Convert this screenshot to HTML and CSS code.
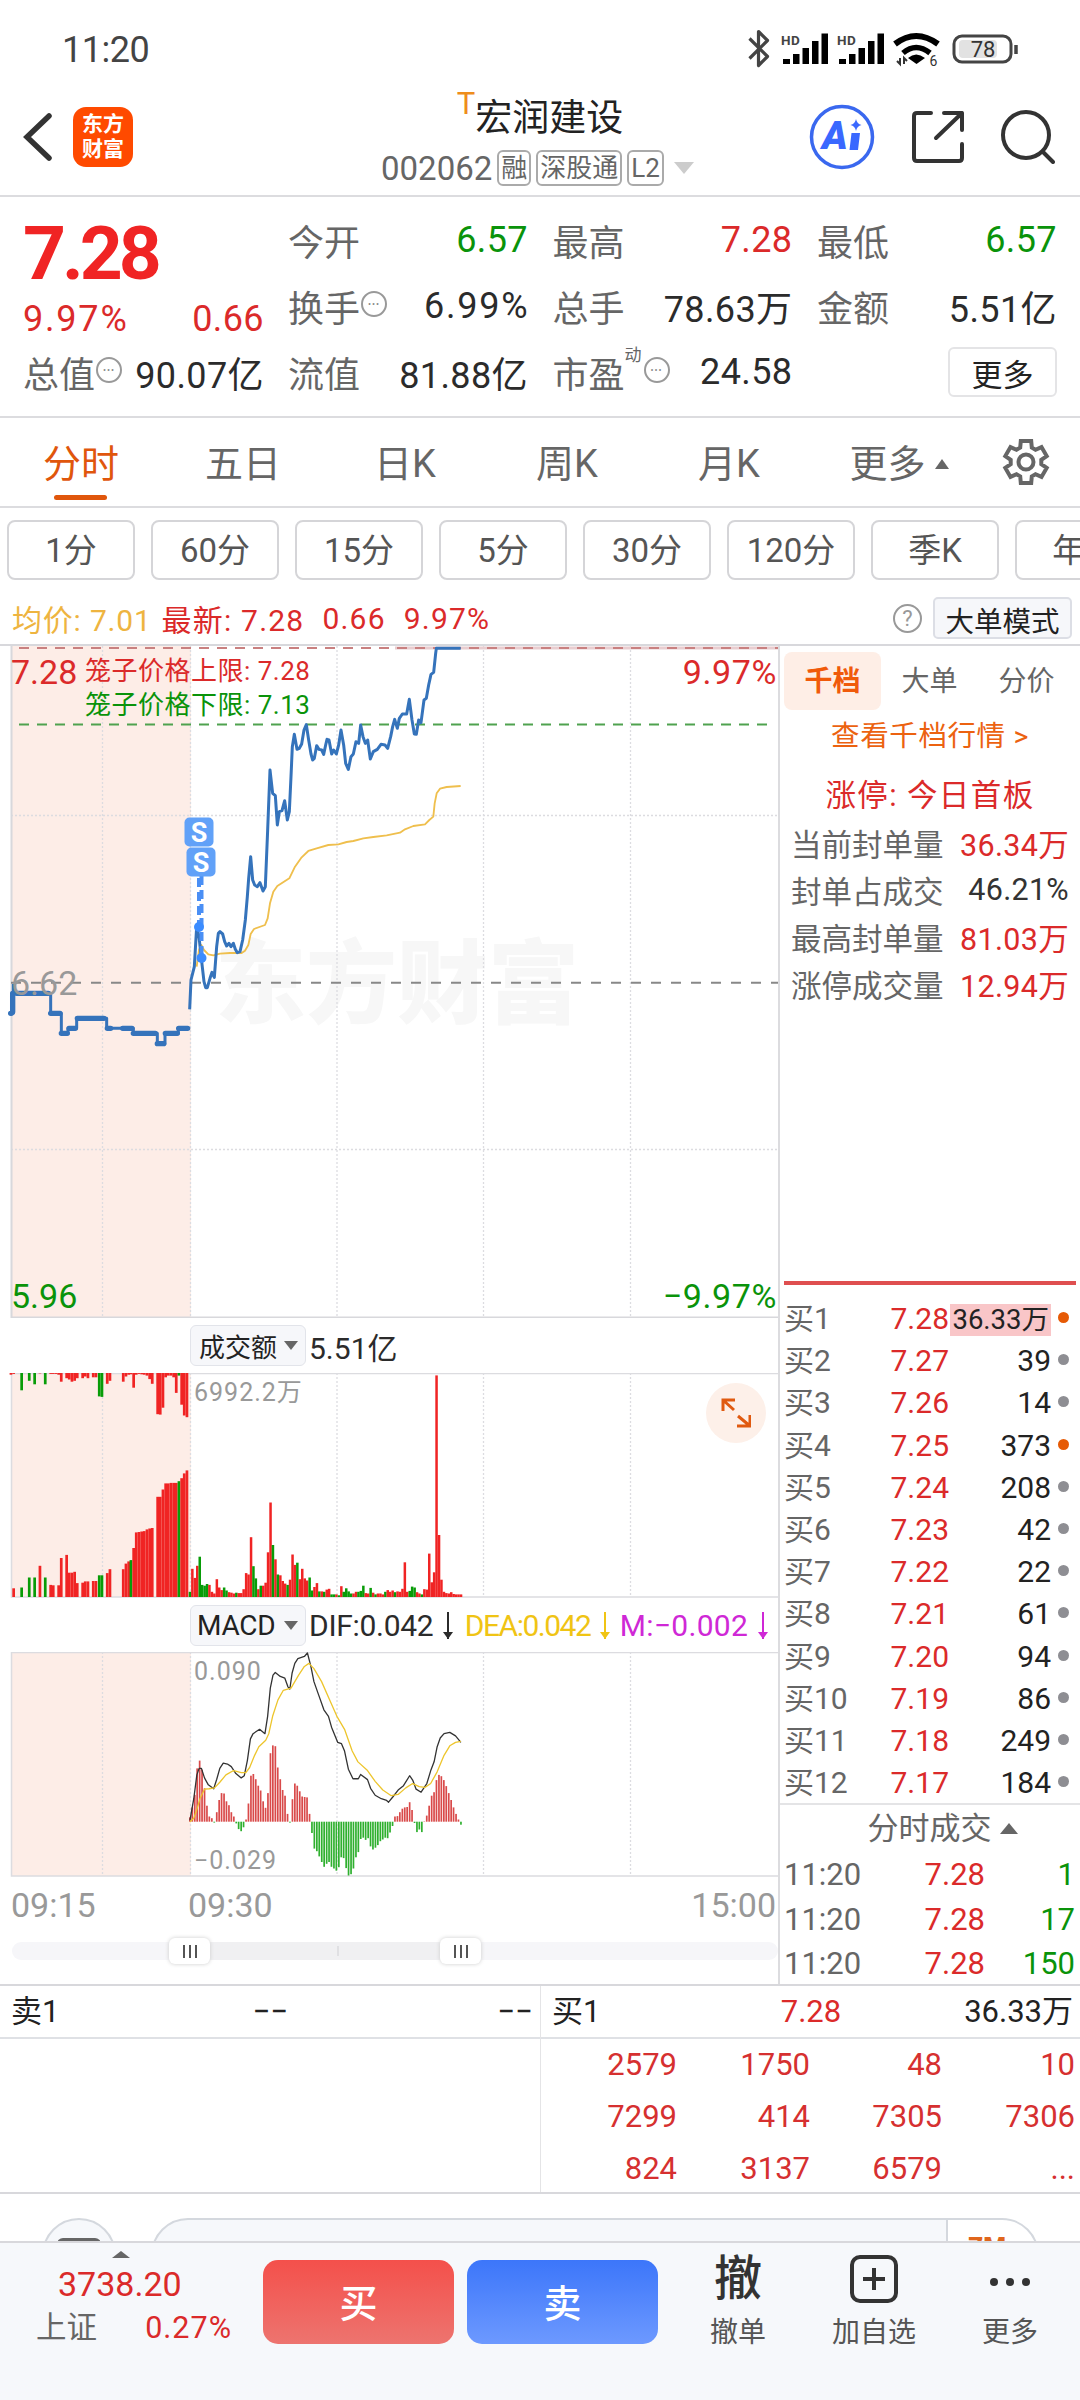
FILE: index.html
```
<!DOCTYPE html>
<html lang="zh-CN">
<head>
  <meta charset="UTF-8" />
  <meta name="viewport" content="width=device-width, initial-scale=1.0"/>
  <title>宏润建设 002062</title>
  <link rel="stylesheet" href="styles.css">
</head>
<body>

<!-- Status bar -->
<div class="status-bar">
  <span class="clock">11:20</span>
  <svg class="status-icons" width="280" height="50" viewBox="0 0 280 50">
    <path d="M4 15 L22 33 L13 42 V8 L22 17 L4 35" transform="translate(1.500 -1.500)" fill="none" stroke="#444" stroke-width="3.200" stroke-linejoin="round"/>
    <g id="signal">
      <text x="37" y="19.500" class="hd">HD</text>
      <path d="M39 34h7v5h-7zM49 29h6.500v10H49zM58.500 23h6.500v16h-6.500zM68 16h6.500v23H68zM77.500 8.500H84V39h-6.500z"/>
    </g>
    <use href="#signal" x="56"/>
    <g fill="none" stroke="#000" stroke-width="6">
      <path d="M151 19 Q172 3 194 19"/>
      <path d="M159 28 Q172 17 186 28" stroke-width="5.500"/>
    </g>
    <path d="M164 33 Q172 26 181 33 L172.500 39z"/>
    <path d="M156 33v6l-3-3M160 39v-6l3 3" fill="none" stroke="#333" stroke-width="2"/>
    <text x="185.500" y="40.500" class="wifi-gen">6</text>
    <rect x="210" y="11" width="57" height="26" rx="8" fill="none" stroke="#444" stroke-width="3"/>
    <rect x="215" y="15" width="38" height="18" rx="4" fill="#e2e2e2"/>
    <path d="M272 20v9" stroke="#444" stroke-width="3.500"/>
    <text x="239" y="32" class="battery">78</text>
  </svg>
</div>

<!-- Header -->
<header class="header">
  <div class="header-left">
    <svg width="30" height="50" viewBox="0 0 30 50"><path d="M27 4 L5 25 L27 46" fill="none" stroke="#333" stroke-width="5.500" stroke-linecap="round"/></svg>
    <div class="logo">东方<br>财富</div>
  </div>
  <div class="stock">
    <div class="stock-name"><span class="t-mark">T</span>宏润建设</div>
    <div class="stock-code">002062<span class="tag">融</span><span class="tag">深股通</span><span class="tag">L2</span><i class="tri-down light"></i></div>
  </div>
  <div class="header-right">
    <svg width="66" height="66" viewBox="0 0 66 66">
      <circle cx="33" cy="33" r="30.500" fill="none" stroke="#3a68ef" stroke-width="3.500"/>
      <text x="13" y="45" class="ai">A</text>
      <path d="M42.500 29h8.500l-2 17h-8.500zM47 15q1 5 5.500 6q-4.500 1-5.500 6q-1-5-5.500-6q4.500-1 5.500-6z" fill="#3a68ff"/>
    </svg>
    <svg width="54" height="54" viewBox="0 0 54 54" fill="none" stroke="#333" stroke-width="4" stroke-linecap="round" stroke-linejoin="round">
      <path d="M20 3H6q-3 0-3 3v42q0 3 3 3h42q3 0 3-3V34M33 3H51V20M51 3L25 28"/>
    </svg>
    <svg width="54" height="54" viewBox="0 0 54 54" fill="none" stroke="#333" stroke-width="4" stroke-linecap="round">
      <circle cx="25" cy="25" r="23"/><path d="M42 42l10 10"/>
    </svg>
  </div>
</header>

<!-- Quote summary -->
<section class="quote">
  <div class="quote-main">
    <div class="price">7.28</div>
    <div class="pair change"><span class="pct">9.97%</span><span>0.66</span></div>
    <div class="pair"><span class="label">总值<i class="more-dot">•••</i></span><span>90.07亿</span></div>
  </div>
  <div class="quote-grid">
    <div class="pair"><span class="label">今开</span><span class="green">6.57</span></div>
    <div class="pair"><span class="label">最高</span><span class="red">7.28</span></div>
    <div class="pair"><span class="label">最低</span><span class="green">6.57</span></div>
    <div class="pair"><span class="label">换手<i class="more-dot">•••</i></span><span class="pct">6.99%</span></div>
    <div class="pair"><span class="label">总手</span><span>78.63万</span></div>
    <div class="pair"><span class="label">金额</span><span>5.51亿</span></div>
    <div class="pair"><span class="label">流值</span><span>81.88亿</span></div>
    <div class="pair"><span class="label">市盈<sup>动</sup><i class="more-dot">•••</i></span><span>24.58</span></div>
    <div class="pair"><span></span><button class="more-btn">更多</button></div>
  </div>
</section>

<nav class="tabs">
  <span class="tab active">分时</span>
  <span class="tab">五日</span>
  <span class="tab">日K</span>
  <span class="tab">周K</span>
  <span class="tab">月K</span>
  <span class="tab more">更多<i class="tri-up small"></i></span>
  <svg class="gear" width="48" height="50" viewBox="-24 -25 48 50" fill="none" stroke="#666" stroke-width="4">
    <path id="gearPath"/><circle r="7.500"/>
  </svg>
</nav>

<div class="periods">
  <span>1分</span><span>60分</span><span>15分</span><span>5分</span><span>30分</span><span>120分</span><span>季K</span><span>年K</span>
</div>

<div class="info-row">
  <span class="avg">均价: 7.01</span>
  <span class="last">最新: 7.28</span>
  <span class="last">0.66</span>
  <span class="last">9.97%</span>
  <span class="help">?</span>
  <button class="mode-btn">大单模式</button>
</div>

<main class="board">
  <div class="charts">
    <!-- Price chart -->
    <svg class="chart" width="778" height="672" viewBox="0 0 778 672">
      <rect x="11" y="0" width="180" height="671" fill="#fdede7"/>
      <text x="215" y="370" class="watermark">东方财富</text>
      <path class="grid" d="M102.500 0V671M190.500 0V671M337 0V671M483.500 0V671M630.500 0V671M11 169.500H778M11 503.500H778"/>
      <path d="M11.500 0V671.500H778" fill="none" stroke="#d8d8dc" stroke-width="2"/>
      <path d="M395 2H778" stroke="#e8cdd0" stroke-width="3"/>
      <path d="M19 2H778" stroke="#c98080" stroke-width="2" stroke-dasharray="10 8"/>
      <path d="M19 78.500H770" stroke="#4fa24f" stroke-width="2" stroke-dasharray="10 8"/>
      <path d="M11 336.800H778" stroke="#888" stroke-width="2" stroke-dasharray="10 10"/>
      <text x="11" y="38" class="axis red">7.28</text>
      <text x="777" y="38" class="axis red end pct-axis">9.97%</text>
      <text x="85" y="34" class="cage red">笼子价格上限: 7.28</text>
      <text x="85" y="68" class="cage green">笼子价格下限: 7.13</text>
      <text x="11" y="662" class="axis green">5.96</text>
      <text x="777" y="662" class="axis green end pct-axis">−9.97%</text>
      <g transform="translate(0 -16) scale(.33333)" fill="none" stroke-linejoin="round">
        <polyline class="avg-line" points="590,1010 597,960 604,945 612,960 625,973 640,976 660,971 690,969 725,969 735,962 745,945 752,912 762,897 795,885 803,865 810,820 820,785 832,768 868,745 885,710 905,682 925,663 950,655 985,645 1015,643 1040,636 1060,633 1090,625 1120,621 1160,616 1200,608 1215,598 1240,588 1275,583 1288,570 1300,560 1304,520 1310,490 1320,476 1340,471 1382,468"/>
        <path class="price-line" d="M34 1150H40V1062M40 1090H152V1150H184V1210H204V1195H230V1165H320V1195H400V1210H472V1241H495V1210H535V1195H567"/>
        <path class="price-dots" d="M32 1150H34M38 1090V1145M50 1090H145M152 1150H180M184 1210H202M207 1195H226M232 1165H312M322 1195H332M368 1195H396M400 1210H466M472 1241H491M496 1210H532M536 1195H563"/>
        <polyline class="price-line" points="569,1138 573,1050 583,1010 590,890 597,920 604,985 612,1055 617,1073 622,1073 630,1045 636,1027 643,1042 650,950 655,910 660,905 668,912 674,935 680,948 687,940 693,950 700,940 706,958 712,968 720,965 728,930 736,870 742,800 746,745 752,680 758,750 764,765 772,770 780,758 789,783 796,770 803,600 810,420 818,490 826,497 832,585 838,545 846,542 854,512 862,570 868,545 873,440 877,350 883,313 891,358 898,355 905,342 912,300 919,284 926,330 933,372 938,390 943,385 950,347 957,358 965,360 971,373 977,345 981,328 987,330 995,372 1001,360 1009,372 1016,345 1023,300 1031,345 1037,400 1045,418 1053,380 1060,372 1068,335 1076,340 1082,285 1089,320 1096,340 1103,330 1111,387 1120,365 1132,358 1143,343 1155,345 1163,355 1172,320 1178,290 1184,268 1192,295 1198,265 1207,252 1220,252 1228,208 1236,270 1243,312 1249,313 1256,270 1263,278 1272,210 1279,205 1286,165 1293,133 1301,127 1307,70 1309,55 1382,55"/>
      </g>
      <!-- Sell markers -->
      <path d="M199 218V282M201.500 230V312" stroke="#4a8ff5" stroke-width="4" stroke-dasharray="9 5"/>
      <circle cx="199" cy="281" r="5" fill="#3b8cff"/>
      <circle cx="201.500" cy="312" r="5" fill="#3b8cff"/>
      <rect x="184.500" y="171.500" width="29" height="29" rx="5" fill="#61a1f8"/>
      <rect x="186.500" y="201.500" width="29" height="29" rx="5" fill="#61a1f8"/>
      <text x="199" y="196" class="sell">S</text>
      <text x="201" y="226" class="sell">S</text>
      <text x="11" y="349" class="axis gray">6.62</text>
    </svg>

    <div class="indicator">
      <span class="select">成交额<i class="tri-down"></i></span>
      <span class="amount">5.51亿</span>
    </div>

    <!-- Turnover chart -->
    <div class="chart-box">
      <svg class="chart" width="778" height="225" viewBox="0 0 778 225">
        <rect x="11" y="0" width="180" height="224" fill="#fdede7"/>
        <path class="grid" d="M102.500 0V224M190.500 0V224M337 0V224M483.500 0V224M630.500 0V224"/>
        <path d="M11.500 0V224H778M11 .5H778" fill="none" stroke="#dcdce0" stroke-width="1.500"/>
        <g id="volume"></g>
        <text x="194" y="28" class="scale">6992.2万</text>
      </svg>
      <span class="expand">
        <svg width="30" height="30" viewBox="0 0 30 30" fill="none" stroke="#e05a10" stroke-width="3">
          <path d="M14 2H2V13M2 2L13 12M29 17V28H16M29 28L17 18"/>
        </svg>
      </span>
    </div>

    <div class="indicator macd">
      <span class="select">MACD<i class="tri-down"></i></span>
      <span class="dif">DIF:0.042<b class="arrow"></b></span>
      <span class="dea">DEA:0.042<b class="arrow"></b></span>
      <span class="m">M:−0.002<b class="arrow"></b></span>
    </div>

    <!-- MACD chart -->
    <svg class="chart" width="778" height="225" viewBox="0 0 778 225">
      <rect x="11" y="0" width="180" height="224" fill="#fdede7"/>
      <path class="grid" d="M102.500 0V224M190.500 0V224M337 0V224M483.500 0V224M630.500 0V224"/>
      <path d="M11.500 0V224H778M11 .5H778" fill="none" stroke="#dcdce0" stroke-width="1.500"/>
      <g id="macd"></g>
      <g transform="translate(180 -352) scale(.38268 .43367)" fill="none" stroke-linejoin="round">
        <polyline class="thin" stroke="#333" points="26,1200 36,1150 44,1095 50,1080 56,1080 64,1102 74,1118 88,1127 96,1105 104,1080 113,1068 124,1070 134,1076 146,1092 160,1102 168,1097 176,1062 184,1012 191,1000 208,990 222,1000 229,960 236,895 243,865 249,859 262,868 274,872 282,892 287,897 293,860 300,838 308,827 325,822 333,814 342,845 350,880 362,910 376,945 388,960 396,985 412,1020 422,1023 430,1040 440,1082 452,1104 466,1104 472,1094 490,1106 498,1126 510,1142 526,1150 540,1154 545,1158 556,1146 570,1130 584,1120 600,1097 608,1107 617,1128 630,1135 645,1115 656,1083 664,1065 672,1030 680,1010 690,1000 705,997 720,1005 734,1020"/>
        <polyline class="thin" stroke="#edc52c" points="26,1203 36,1195 44,1175 52,1150 64,1128 76,1127 90,1125 104,1112 120,1095 140,1085 160,1090 172,1090 182,1078 195,1050 206,1030 224,1015 232,1000 242,960 256,922 270,900 290,895 310,865 325,845 337,838 350,850 370,880 390,920 410,960 430,990 450,1040 465,1065 490,1085 510,1110 530,1130 552,1143 570,1140 590,1125 608,1115 625,1122 640,1124 655,1115 672,1088 690,1050 705,1028 720,1020 734,1018"/>
      </g>
      <text x="194" y="28" class="scale">0.090</text>
      <text x="194" y="217" class="scale">−0.029</text>
    </svg>

    <div class="times"><span>09:15</span><span class="mid">09:30</span><span>15:00</span></div>
    <div class="slider">
      <div class="range"></div>
      <span class="handle start"><i></i><i></i><i></i></span>
      <span class="handle stop"><i></i><i></i><i></i></span>
    </div>
  </div>

  <!-- Order book -->
  <aside class="side">
    <div class="side-tabs"><span class="on">千档</span><span>大单</span><span>分价</span></div>
    <div class="side-link">查看千档行情 &gt;</div>
    <div class="limit-title">涨停: 今日首板</div>
    <div class="limit">
      <div><span>当前封单量</span><b class="red">36.34万</b></div>
      <div><span>封单占成交</span><b>46.21%</b></div>
      <div><span>最高封单量</span><b class="red">81.03万</b></div>
      <div><span>涨停成交量</span><b class="red">12.94万</b></div>
    </div>
    <div class="orders" id="orders"></div>
    <div class="deals-title">分时成交<i class="tri-up"></i></div>
    <div class="deals">
      <div><span>11:20</span><span class="red">7.28</span><span class="green">1</span></div>
      <div><span>11:20</span><span class="red">7.28</span><span class="green">17</span></div>
      <div><span>11:20</span><span class="red">7.28</span><span class="green">150</span></div>
    </div>
  </aside>
</main>

<!-- Queue -->
<section class="queue">
  <div class="queue-half">
    <div class="queue-head"><span>卖1</span><span class="dash">−−</span><span class="dash">−−</span></div>
  </div>
  <div class="queue-half">
    <div class="queue-head"><span>买1</span><span class="red">7.28</span><span>36.33万</span></div>
    <div class="queue-grid">
      <span>2579</span><span>1750</span><span>48</span><span>10</span>
      <span>7299</span><span>414</span><span>7305</span><span>7306</span>
      <span>824</span><span>3137</span><span>6579</span><span>...</span>
    </div>
  </div>
</section>

<div class="peek">
  <div class="peek-circle"><i></i></div>
  <div class="peek-pill"><span>7M</span></div>
</div>

<footer class="footer">
  <div class="index">
    <i class="tri-up"></i>
    <div class="index-value">3738.20</div>
    <div class="index-row"><span>上证</span><span class="red">0.27%</span></div>
  </div>
  <button class="trade buy">买</button>
  <button class="trade sell-btn">卖</button>
  <div class="actions">
    <div><span class="cancel">撤</span><small>撤单</small></div>
    <div>
      <svg width="50" height="50" viewBox="0 0 50 50" fill="none" stroke="#333" stroke-width="4"><rect x="3" y="3" width="44" height="44" rx="8"/><path d="M25 14V36M14 25H36"/></svg>
      <small>加自选</small>
    </div>
    <div>
      <svg width="50" height="50" viewBox="0 0 50 50" fill="#333"><circle cx="9" cy="28" r="4"/><circle cx="25" cy="28" r="4"/><circle cx="41" cy="28" r="4"/></svg>
      <small>更多</small>
    </div>
  </div>
</footer>

<script>
  const RED = "#f02424", GREEN = "#089c08";

  function bar(x, y, w, h, fill) {
    return `<rect x="${x.toFixed(1)}" y="${y.toFixed(1)}" width="${w}" height="${h.toFixed(1)}" fill="${fill}"/>`;
  }

  // One value per minute from 09:30, "g" marks a falling minute
  const minutes = "12g 65 44 72 93g 28g 26g 30g 28 12 8 41 22 16 22g 15g 11 10 8 10g 9 9 18 55 52 138 71g 43g 18 26g 26 33 103 218 120g 87 52g 50 37 31 28g 40 98 74 79g 41 65 43 38 45g 15g 23 32 13g 13 12g 17 19 6g 6g 6 4g 25 12g 20g 13g 8g 8 12 12g 14g 26g 9 8 21g 10 6g 8 8 6 12g 16 12 15 11g 13 12 19 80 12 14g 24g 22g 11 8 6g 18 17 100 34 57 511 143 40 12 9 8 11 7 6 6 6".split(" ");
  const call = "41:20 65:22g 88:45g 104:45g 120:72 136:45g 152:28 160:27 176:27 184:90 200:97 208:56 216:56 224:58 232:32 248:33 256:36 264:36 280:37 288:37 298:50g 306:50g 322:55 330:64 370:64 378:77 386:82 393:85g 401:113 409:149 417:150 425:151 433:152 441:156 449:158 457:159 473:231 481:231 489:248 497:262 505:262 513:263 521:263 529:263 537:267g 545:274 553:285 561:292".split(" ");
  const unmatched = "33:4 41:2 65:40g 88:18g 104:26g 120:1 136:26g 152:2 160:2 168:2 176:4 184:20 200:12 208:15 216:20 224:18 232:12 248:12 256:8 264:12 280:10 288:10 298:54g 306:55g 322:25 330:18 370:20 378:8 386:4 393:3 401:34 409:4 417:2 425:3 433:4 441:6 449:14 457:25 473:95 481:96 489:80 497:10 505:6 513:6 521:10 529:46 537:6g 545:73 553:98 561:102".split(" ");

  let out = "";
  const tone = v => v.endsWith("g") ? GREEN : RED;
  call.forEach(v => {
    const [x, h] = v.split(":");
    out += bar(x / 3 - 1.4, 224 - parseFloat(h) / 2.306, 2.7, parseFloat(h) / 2.306, tone(h));
  });
  unmatched.forEach(v => {
    const [x, h] = v.split(":");
    out += bar(x / 3 - 1.4, 0, 2.7, parseFloat(h) / 2.306, tone(h));
  });
  minutes.forEach((v, i) => {
    const h = parseFloat(v) / 2.306;
    out += bar(188.7 + i * 2.442, 224 - h, 2.5, h, tone(v));
  });
  document.getElementById("volume").innerHTML = out;

  const macd = [10,33,62,123,141,120,77,37,12,8,-2,22,50,66,65,47,38,22,12,-4,-17,-22,-13,5,42,106,110,98,83,72,47,32,66,158,176,174,125,98,73,60,18,-2,52,88,83,70,58,57,56,18,-26,-62,-68,-80,-93,-104,-97,-93,-104,-108,-113,-105,-82,-84,-107,-124,-121,-108,-82,-70,-40,-37,-42,-38,-57,-64,-60,-54,-45,-41,-37,-38,-25,-10,12,13,22,30,33,34,45,27,-3,-24,-18,-24,1,14,37,60,68,96,108,105,96,82,66,50,33,18,5,-7];
  document.getElementById("macd").innerHTML = macd.map((v, i) => {
    const h = Math.abs(v) / 2.306;
    return bar(189 + i * 2.442, v > 0 ? 169.7 - h : 169.7, 1.7, h, v > 0 ? "#d94a4a" : "#2fb02f");
  }).join("");

  // Order book rows
  const orders = [["7.28", "36.33万", 1], ["7.27", 39], ["7.26", 14], ["7.25", 373, 1], ["7.24", 208], ["7.23", 42], ["7.22", 22], ["7.21", 61], ["7.20", 94], ["7.19", 86], ["7.18", 249], ["7.17", 184]];
  document.getElementById("orders").innerHTML = orders.map((o, i) =>
    `<div class="order"><span>买${i + 1}</span><span class="red">${o[0]}</span><span class="qty"><em class="${i ? "" : "flash"}">${o[1]}</em></span><i class="${o[2] ? "hot" : ""}"></i></div>`
  ).join("");

  // Gear outline, six teeth
  const pts = [];
  for (let i = 0; i < 6; i++) {
    [[-22, 15.5], [-14, 21.5], [14, 21.5], [22, 15.5]].forEach(([a, r]) => {
      const t = (i * 60 - 90 + a) * Math.PI / 180;
      pts.push((r * Math.cos(t)).toFixed(1) + " " + (r * Math.sin(t)).toFixed(1));
    });
  }
  document.getElementById("gearPath").setAttribute("d", "M" + pts.join("L") + "z");
</script>

</body>
</html>
```
FILE: styles.css
```
* {
  box-sizing: border-box;
}

body {
  margin: 0;
  width: 1080px;
  height: 2400px;
  overflow: hidden;
  background: #fff;
  color: #2b2b2b;
  font-family: Roboto, "Noto Sans CJK SC", sans-serif;
}

i, em {
  font-style: normal;
}

button {
  font-family: inherit;
  color: #222;
  padding: 0;
}

svg {
  display: block;
  flex: none;
}

.red { color: #db2a2a; fill: #db2a2a; }
.green { color: #0a930a; fill: #0a930a; }
.gray { fill: #999; }

.tri-down, .tri-up {
  display: inline-block;
  border: 7px solid transparent;
}
.tri-down { border-top: 9px solid #666; border-bottom: 0; }
.tri-up { border: 9px solid transparent; border-bottom: 11px solid #666; border-top: 0; }
.tri-down.light { border-width: 12px 10px 0; border-top-color: #ccc; margin-left: 10px; }
.tri-up.small { border-width: 0 7px 10px; margin-left: 9px; }

/* status bar */
.status-bar {
  height: 100px;
  display: flex;
  justify-content: space-between;
  padding: 25px 56px 0 62px;
}
.clock {
  font-size: 36px;
  line-height: 50px;
  letter-spacing: -0.5px;
  color: #444;
}
.hd { font-size: 13.500px; font-weight: 700; fill: #444; letter-spacing: .5px; }
.wifi-gen { font-size: 14px; fill: #333; }
.battery { font-size: 22px; fill: #333; text-anchor: middle; }

/* header */
.header {
  height: 97px;
  display: grid;
  grid-template-columns: 300px 1fr 300px;
  border-bottom: 2px solid #dcdcdf;
}
.header-left {
  display: flex;
  align-items: center;
  padding: 0 0 21px 22px;
}
.logo {
  margin-left: 21px;
  width: 60px;
  height: 60px;
  padding-top: 5px;
  border-radius: 13px;
  background: #ff4a00;
  color: #fff;
  font-size: 21px;
  font-weight: 700;
  line-height: 25px;
  text-align: center;
}
.stock {
  text-align: center;
  margin-top: -7px;
}
.stock-name {
  font-size: 37px;
  line-height: 52px;
  height: 52px;
  padding-left: 0;
  color: #222;
}
.t-mark {
  font-size: 31px;
  color: #ee8d1c;
  position: relative;
  top: -17px;
}
.stock-code {
  display: flex;
  align-items: center;
  justify-content: center;
  height: 36px;
  margin: 5px 0 0 -5px;
  font-size: 33px;
  color: #666;
}
.tag {
  border: 2px solid #aaa;
  border-radius: 6px;
  height: 36px;
  line-height: 32px;
  padding: 0 2px;
  margin-left: 5px;
  font-size: 26px;
}
.header-right {
  display: flex;
  align-items: center;
  gap: 36px;
  padding: 0 0 22px 29px;
}
.ai { font-size: 39px; font-weight: 900; font-style: italic; fill: #3a68ff; }

/* quote */
.quote {
  height: 221px;
  display: flex;
  border-bottom: 2px solid #dcdcdf;
  font-size: 36px;
}
.quote-main {
  width: 241px;
  margin-left: 23px;
}
.price {
  height: 90px;
  padding-top: 12px;
  font-size: 75px;
  line-height: 88px;
  font-weight: 700;
  letter-spacing: -4px;
  color: #f02424;
}
.quote-grid {
  width: 768px;
  margin: 10px 0 0 24px;
  display: grid;
  grid-template-columns: repeat(3, 240px);
  grid-auto-rows: 66px;
  column-gap: 24.500px;
}
.pair {
  display: flex;
  justify-content: space-between;
  align-items: center;
  height: 66px;
  white-space: nowrap;
  letter-spacing: .4px;
}
.pair .pct { letter-spacing: 1.800px; margin-right: -1.500px; }
.change {
  height: 63px;
  color: #db2a2a;
}
.quote-main .pair:last-child { height: 44px; }
.label {
  color: #666;
  display: flex;
  align-items: center;
  letter-spacing: 0;
}
.label sup {
  font-size: 17px;
  align-self: flex-start;
  line-height: 18px;
  margin-right: -14px;
  margin-top: 0;
}
.label sup + .more-dot { margin-left: 16px; }
.more-dot {
  width: 26px;
  height: 26px;
  border: 2px solid #999;
  border-radius: 50%;
  font-size: 9px;
  line-height: 22px;
  letter-spacing: 1px;
  text-align: center;
  color: #888;
  margin-left: 1px;
  margin-top: -4px;
}
.more-btn {
  width: 109px;
  height: 50px;
  background: #fff;
  border: 2px solid #e4e4e6;
  border-radius: 6px;
  font-size: 31px;
}

/* tabs */
.tabs {
  height: 90px;
  display: flex;
  align-items: center;
  border-bottom: 2px solid #dcdcdf;
  font-size: 38px;
  color: #666;
  line-height: 88px;
}
.tab {
  width: 162px;
  height: 88px;
  padding-top: 2px;
  text-align: center;
  position: relative;
}
.tab.more { padding-left: 16px; }
.tab.more .tri-up { vertical-align: 8px; }
.active { color: #e0560c; }
.active::after {
  content: "";
  position: absolute;
  left: 54px;
  bottom: 6px;
  width: 53px;
  height: 5px;
  border-radius: 3px;
  background: #e0560c;
}
.gear { margin-left: 30px; }

.periods {
  display: flex;
  gap: 16px;
  padding: 12px 0 0 7px;
  height: 84px;
  overflow: hidden;
}
.periods span {
  flex: 0 0 128px;
  height: 60px;
  border: 2px solid #d5d5d8;
  border-radius: 8px;
  font-size: 33px;
  line-height: 57px;
  text-align: center;
  color: #555;
}

.info-row {
  height: 54px;
  padding: 0 8px 0 12px;
  display: flex;
  align-items: center;
  font-size: 30px;
  white-space: pre;
  border-bottom: 2px solid #d8d8dc;
}
.avg { color: #eeb440; margin-right: 10px; letter-spacing: .8px; }
.last { color: #db2a2a; margin-right: 18px; letter-spacing: 1.200px; }
.help {
  margin-left: auto;
  width: 29px;
  height: 29px;
  border: 2px solid #999;
  border-radius: 50%;
  text-align: center;
  font-size: 22px;
  line-height: 26px;
  color: #999;
}
.mode-btn {
  margin-left: 11px;
  width: 139px;
  height: 42px;
  font-size: 28.500px;
  background: #f6f7fa;
  border: 2px solid #dcdee5;
  border-radius: 5px;
}

/* charts */
.board {
  height: 1338px;
  display: flex;
}
.charts { width: 778px; }
.grid {
  stroke: #dcdce0;
  stroke-width: 1.300;
  stroke-dasharray: 2 2;
}
.watermark { font-size: 91px; font-weight: 900; fill: #f7f7f7; }
.axis { font-size: 34px; }
.pct-axis { letter-spacing: .6px; }
.end { text-anchor: end; }
.cage { font-size: 26px; letter-spacing: .5px; }
.scale { font-size: 25px; fill: #999; letter-spacing: 1px; }
.sell { font-size: 27px; font-weight: 700; fill: #fff; text-anchor: middle; }
.price-line { stroke: #3573bb; stroke-width: 9; }
.price-dots { stroke: #3573bb; stroke-width: 16; stroke-linecap: round; }
.avg-line { stroke: #efbf4d; stroke-width: 5.500; }
.thin { stroke-width: 1.300; vector-effect: non-scaling-stroke; }

.indicator {
  height: 55px;
  margin-left: 190px;
  display: flex;
  align-items: center;
  font-size: 30px;
  white-space: nowrap;
}
.select {
  width: 116px;
  height: 41px;
  display: flex;
  align-items: center;
  justify-content: space-between;
  padding: 0 7px 0 8px;
  background: #f6f7fa;
  border: 1px solid #e2e4ea;
  border-radius: 6px;
  font-size: 26px;
  color: #222;
  margin-right: 3px;
}
.macd { height: 54px; }
.macd .select { font-size: 28px; letter-spacing: -0.3px; padding-left: 6px; }
.dif, .dea, .m { display: flex; align-items: center; }
.dea { color: #f0c414; margin-left: 11px; letter-spacing: -1.500px; }
.dif { letter-spacing: -0.3px; }
.m { color: #cf28d6; margin-left: 9px; letter-spacing: .3px; }
.arrow {
  width: 1.500px;
  height: 27px;
  background: currentColor;
  margin: 0 5px 0 14px;
  position: relative;
}
.arrow::after {
  content: "";
  position: absolute;
  left: -4px;
  bottom: 0;
  border: 5px solid transparent;
  border-top: 7px solid currentColor;
  border-bottom: 0;
}

.chart-box { position: relative; }
.expand {
  position: absolute;
  right: 12px;
  top: 10px;
  width: 60px;
  height: 60px;
  border-radius: 50%;
  background: #fdf0e9;
  display: flex;
  align-items: center;
  justify-content: center;
}

.times {
  display: grid;
  grid-template-columns: 177px 1fr auto;
  padding: 0 2px 0 11px;
  font-size: 34px;
  line-height: 56px;
  height: 65px;
  color: #999;
}
.slider {
  position: relative;
  width: 766px;
  height: 18px;
  margin-left: 12px;
  border-radius: 9px;
  background: #f6f6f9;
}
.range {
  width: 272px;
  height: 18px;
  margin-left: 177px;
  background: linear-gradient(#e0e0e3, #e0e0e3) 148px 4px / 2px 10px no-repeat #f0f0f2;
}
.handle {
  position: absolute;
  top: -4px;
  width: 41px;
  height: 26px;
  border-radius: 6px;
  background: #fff;
  box-shadow: 0 0 4px #ccc;
  display: flex;
  justify-content: center;
  align-items: center;
  gap: 4px;
}
.start { left: 157px; }
.stop { left: 428px; }
.handle i { width: 2px; height: 13px; background: #555; }

/* side panel */
.side {
  width: 302px;
  border-left: 2px solid #dcdcdf;
  color: #666;
  display: flex;
  flex-direction: column;
}
.side-tabs {
  display: flex;
  padding: 6px 0 0 4px;
  font-size: 28px;
  line-height: 60px;
  height: 64px;
  text-align: center;
}
.side-tabs span { width: 97px; height: 58px; border-radius: 8px; }
.side-tabs .on { background: #feeee6; color: #f05a0a; font-weight: 700; }
.side-link {
  text-align: center;
  font-size: 28.500px;
  letter-spacing: .6px;
  line-height: 54px;
  color: #ec6210;
}
.limit-title {
  text-align: center;
  font-size: 30.500px;
  letter-spacing: 1.400px;
  line-height: 60px;
  color: #db2a2a;
  margin: 2px 0 -7px;
}
.limit {
  height: 466px;
  flex: none;
  margin: 0 4px;
  border-bottom: 4px solid #df4f50;
}
.limit div {
  display: flex;
  justify-content: space-between;
  align-items: center;
  height: 47px;
  padding: 0 7px 0 7px;
  font-size: 30.500px;
}
.limit b { font-weight: 400; letter-spacing: .3px; }
.limit b:not(.red) { color: #333; }
.orders {
  padding: 13px 9px 0 4px;
  height: 520px;
  border-bottom: 2px solid #e4e4e6;
  margin-top: auto;
}
.order {
  display: grid;
  grid-template-columns: 80px 85px 102px 19px;
  height: 42.200px;
  line-height: 42px;
  font-size: 30px;
}
.order .red { text-align: right; }
.qty { text-align: right; color: #222; white-space: nowrap; }
.flash {
  display: inline-block;
  line-height: 32px;
  height: 32px;
  padding: 0 2px;
  font-size: 27.500px;
  background: #f9c6c8;
}
.order i {
  width: 11px;
  height: 11px;
  border-radius: 50%;
  background: #8e8e93;
  margin: 14px 0 0 7px;
}
.order .hot { background: #e65a05; }
.deals-title {
  text-align: center;
  font-size: 31px;
  line-height: 48px;
  height: 48px;
  padding-left: 25px;
}
.deals-title i { margin: 0 0 5px 8px; }
.deals { padding-bottom: 0; height: 132px; }
.deals div {
  display: grid;
  grid-template-columns: 100px 101px 1fr;
  padding: 0 5px 0 4px;
  font-size: 31px;
  line-height: 44.500px;
}
.deals span + span { text-align: right; }

/* queue */
.queue {
  height: 210px;
  display: flex;
  border-top: 2px solid #d8d8dc;
  border-bottom: 2px solid #d8d8dc;
}
.queue-half { width: 540px; }
.queue-half + .queue-half { border-left: 1px solid #e4e4e6; }
.queue-head {
  height: 53px;
  display: grid;
  grid-template-columns: 1fr 1fr 1fr;
  padding: 0 7px 0 11px;
  border-bottom: 2px solid #dfe1e5;
  font-size: 31px;
  line-height: 51px;
  color: #222;
}
.queue-head span + span { text-align: center; padding-right: 3px; }
.queue-head span + span + span { text-align: right; padding-right: 0; }
.queue-grid {
  display: grid;
  grid-template-columns: 136px 133px 132px 133px;
  font-size: 31px;
  line-height: 52px;
  text-align: right;
  color: #d63030;
}

.peek {
  height: 47px;
  display: flex;
  padding-top: 24px;
  overflow: hidden;
}
.peek-circle {
  flex: none;
  width: 74px;
  height: 74px;
  margin-left: 42px;
  border: 2px solid #d4d8de;
  border-radius: 50%;
  background: #f6f8fb;
}
.peek-circle i {
  display: block;
  width: 44px;
  height: 30px;
  margin: 18px 0 0 13px;
  border: 4px solid #666;
  border-radius: 6px;
}
.peek-pill {
  width: 888px;
  height: 74px;
  margin-left: 35px;
  border: 2px solid #d4d8de;
  border-radius: 37px;
  background: linear-gradient(#d4d8de, #d4d8de) 793px 0 / 2px 100% no-repeat, linear-gradient(90deg, #f6f8fb 793px, #fff 793px);
  text-align: right;
  color: #e0661c;
  font-size: 26px;
  font-weight: 900;
  line-height: 30px;
  padding: 12px 31px;
}

/* footer */
.footer {
  height: 160px;
  display: flex;
  background: #f6f8fb;
  border-top: 2px solid #d8d8dc;
}
.index {
  width: 232px;
  padding-left: 36px;
  margin-right: 31px;
  color: #666;
}
.index > .tri-up {
  display: block;
  width: 18px;
  margin: 8px 0 0 76px;
  border-bottom-width: 7px;
}
.index-value {
  color: #db2a2a;
  font-size: 34px;
  line-height: 44px;
  margin: 4px 0 0 22px;
}
.index-row {
  display: flex;
  justify-content: space-between;
  font-size: 30.500px;
  line-height: 44px;
}
.index-row .red { letter-spacing: 1px; }
.trade {
  width: 191px;
  height: 84px;
  margin: 17px 13px 0 0;
  padding-bottom: 4px;
  border: 0;
  border-radius: 15px;
  color: #fff;
  font-size: 38px;
  font-weight: 500;
}
.buy { background: linear-gradient(#f4504b, #ed746f); }
.sell-btn { background: linear-gradient(#3c76fa, #6d99ff); }
.actions {
  display: flex;
  margin-left: -1px;
}
.actions div {
  width: 136px;
  height: 110px;
  padding-top: 11px;
  display: flex;
  flex-direction: column;
  align-items: center;
  color: #333;
}
.cancel { font-size: 48px; line-height: 50px; font-weight: 500; }
.actions small { font-size: 28px; line-height: 40px; margin-top: 9px; color: #555; }
```
